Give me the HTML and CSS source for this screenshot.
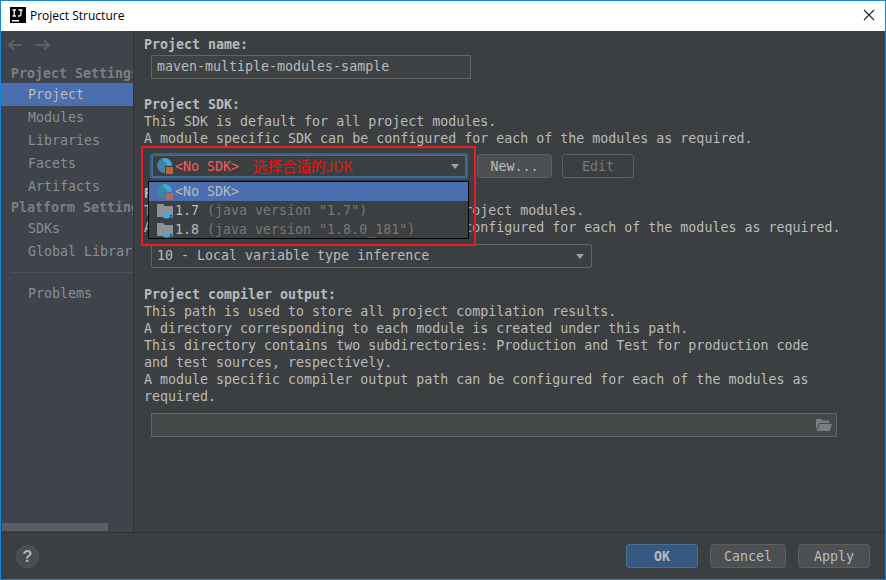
FILE: index.html
```html
<!DOCTYPE html>
<html lang="en">
<head>
<meta charset="utf-8">
<title>Project Structure</title>
<link rel="stylesheet" href="styles.css">
</head>
<body>
<svg class="defs" width="0" height="0" aria-hidden="true">
  <symbol id="sdk" viewBox="0 0 16 16">
    <circle cx="7.5" cy="7.5" r="7.5" fill="#3f83a6"/>
    <path d="M6 .2a7.500 7.500 0 0 1 9 7.300H10A4 4 0 0 0 6.500 4z" fill="#3fa9d8"/>
    <rect x="8" y="8" width="8" height="8" fill="#3c3f41"/>
    <rect x="9" y="9" width="7" height="7" fill="#b9623b"/>
  </symbol>
  <symbol id="sdk-active" viewBox="0 0 16 16">
    <circle cx="7.5" cy="7.5" r="7.5" fill="#3f83a6"/>
    <path d="M6 .2a7.500 7.500 0 0 1 9 7.300H10A4 4 0 0 0 6.500 4z" fill="#3fa9d8"/>
    <rect x="8" y="8" width="8" height="8" fill="#4b6eaf"/>
    <rect x="9" y="9" width="7" height="7" fill="#b4675a"/>
  </symbol>
  <symbol id="jdk" viewBox="0 0 16 16">
    <path d="M0 1h6l2 2h8v9H7v2H0z" fill="#8b9399"/>
    <path d="M6 11h7v2.500a2 2 0 0 1-2 2H8a2 2 0 0 1-2-2z" fill="#3fa9d8"/>
    <path d="M13 11.500h2.500V14H13" fill="none" stroke="#3fa9d8"/>
  </symbol>
</svg>
<div class="window">
  <header class="titlebar">
    <svg class="app-icon" width="16" height="16" viewBox="0 0 16 16" aria-hidden="true">
      <rect width="16" height="16" fill="#000"/>
      <rect x="2" y="13" width="7" height="1.500" fill="#fff"/>
      <path d="M2.500 3h3.500M4.200 3v6M2.500 9h3.500M8.500 3h4M11 3v4.500a1.500 1.500 0 0 1-1.500 1.500H8" stroke="#fff" stroke-width="1.300" fill="none"/>
    </svg>
    <span class="title">Project Structure</span>
    <svg class="close" width="12" height="12" viewBox="0 0 12 12" aria-hidden="true">
      <path d="M1 1l10 10M11 1L1 11" stroke="#222" stroke-width="1.100" fill="none"/>
    </svg>
  </header>
  <div class="body">
    <nav class="sidebar">
      <div class="arrows">
        <svg width="44" height="12" viewBox="0 0 44 12" aria-hidden="true">
          <path d="M15 6H2M7 1.500L2 6l5 4.500M29 6h13M37 1.500L42 6l-5 4.500" stroke="#5c6066" stroke-width="2" fill="none"/>
        </svg>
      </div>
      <div class="nav-head">Project Settings</div>
      <div class="nav-item selected">Project</div>
      <div class="nav-item">Modules</div>
      <div class="nav-item">Libraries</div>
      <div class="nav-item">Facets</div>
      <div class="nav-item">Artifacts</div>
      <div class="nav-head platform">Platform Settings</div>
      <div class="nav-item">SDKs</div>
      <div class="nav-item">Global Libraries</div>
      <div class="nav-sep"></div>
      <div class="nav-item">Problems</div>
      <div class="scrollbar"></div>
    </nav>
    <main class="content">
      <div class="label">Project name:</div>
      <div class="field name-field">maven-multiple-modules-sample</div>

      <div class="label sdk-label">Project SDK:</div>
      <p class="line">This SDK is default for all project modules.</p>
      <p class="line">A module specific SDK can be configured for each of the modules as required.</p>
      <div class="sdk-row">
        <div class="combo sdk-combo">
          <svg class="icon" width="16" height="16"><use href="#sdk"/></svg>
          <span class="no-sdk">&lt;No SDK&gt;</span>
          <span class="caret"></span>
        </div>
        <button class="btn new-btn">New...</button>
        <button class="btn edit-btn" disabled>Edit</button>
      </div>

      <div class="label level-label">Project language level:</div>
      <p class="line">This language level is default for all project modules.</p>
      <p class="line">A module specific language level can be configured for each of the modules as required.</p>
      <div class="combo level-combo">
        <span>10 - Local variable type inference</span>
        <span class="caret"></span>
      </div>

      <div class="label output-label">Project compiler output:</div>
      <p class="line">This path is used to store all project compilation results.</p>
      <p class="line">A directory corresponding to each module is created under this path.</p>
      <p class="line">This directory contains two subdirectories: Production and Test for production code</p>
      <p class="line">and test sources, respectively.</p>
      <p class="line">A module specific compiler output path can be configured for each of the modules as</p>
      <p class="line">required.</p>
      <div class="field output-field">
        <svg class="folder" width="16" height="14" viewBox="0 0 16 14" aria-hidden="true">
          <path d="M0 1h5l1.500 1.500H13V5H3.500L0 12z" fill="#7a7e80"/>
          <path d="M3.800 6H16l-2.500 7H.8z" fill="#7a7e80"/>
        </svg>
      </div>

      <div class="popup">
        <div class="popup-row active">
          <svg class="icon" width="16" height="16"><use href="#sdk-active"/></svg>
          <span>&lt;No SDK&gt;</span>
        </div>
        <div class="popup-row">
          <svg class="icon" width="16" height="16"><use href="#jdk"/></svg>
          <span>1.7 <span class="muted">(java version "1.7")</span></span>
        </div>
        <div class="popup-row">
          <svg class="icon" width="16" height="16"><use href="#jdk"/></svg>
          <span>1.8 <span class="muted">(java version "1.8.0_181")</span></span>
        </div>
      </div>
      <div class="red-box"></div>
      <div class="note">选择合适的JDK</div>
    </main>
  </div>
  <footer class="footer">
    <button class="help">?</button>
    <div class="actions">
      <button class="btn ok-btn">OK</button>
      <button class="btn cancel-btn">Cancel</button>
      <button class="btn apply-btn">Apply</button>
    </div>
  </footer>
</div>
</body>
</html>
```

FILE: styles.css
```css
* { box-sizing: border-box; }
html, body { margin: 0; height: 100%; }
body {
  width: 886px;
  height: 580px;
  overflow: hidden;
  font-family: "DejaVu Sans Mono", "Liberation Mono", monospace;
  font-size: 13.3px;
  line-height: 17px;
  color: #bbbbbb;
}
.defs { position: absolute; }
.window {
  display: flex;
  flex-direction: column;
  width: 886px;
  height: 580px;
  border: 1px solid #1883d7;
  background: #3c3f41;
}
.titlebar {
  display: flex;
  align-items: center;
  flex: none;
  height: 30px;
  padding: 0 9px 2px 9px;
  background: #fff;
}
.app-icon { flex: none; }
.title {
  margin-left: 4px;
  font-family: "Open Sans", "Noto Sans", sans-serif;
  font-size: 12px;
  color: #000;
}
.close { margin-left: auto; margin-right: 1px; }
.body { display: flex; flex: 1; min-height: 0; }
.sidebar {
  position: relative;
  flex: none;
  width: 133px;
  padding-top: 8px;
  overflow: hidden;
  white-space: nowrap;
  background: #3e434c;
  border-right: 1px solid #323232;
  color: #8b8e92;
}
.arrows { height: 12px; margin-left: 6px; display: flex; }
.nav-head { height: 20px; margin-top: 12px; padding-left: 10px; font-weight: 700; color: #7d7f82; line-height: 22px; }
.nav-head.platform { height: 19px; margin-top: 0; line-height: 19px; }
.nav-item { height: 23px; padding-left: 27px; line-height: 23px; }
.nav-item.selected { background: #4b6eaf; color: #bbbbbb; }
.nav-sep { height: 1px; margin: 9px 0 9px 10px; background: #4f5156; }
.scrollbar { position: absolute; left: 1px; bottom: 1px; width: 106px; height: 8px; background: #5a5d66; }
.content { position: relative; flex: 1; min-width: 0; padding: 5px 0 0 10px; white-space: nowrap; }
.label { font-weight: 700; height: 17px; }
.line { margin: 0; height: 17px; }
.sdk-label { margin-top: 17px; }
.level-label { margin-top: 6px; }
.output-label { margin-top: 18px; }
.field {
  display: flex;
  align-items: center;
  height: 24px;
  margin-left: 7px;
  padding-left: 5px;
  border: 1px solid #646464;
  background: #45494a;
}
.name-field { width: 320px; margin-top: 2px; padding-bottom: 1px; background: #3f4244; }
.output-field { width: 686px; margin-top: 8px; justify-content: flex-end; padding: 0 4px 0 0; }
.sdk-row { display: flex; align-items: center; margin: 6px 0 0 6px; }
.combo {
  display: flex;
  align-items: center;
  position: relative;
  background: #3c3f41;
}
.sdk-combo {
  width: 318px;
  height: 26px;
  padding-left: 5px;
  border: 2px solid #3d6185;
  border-radius: 3px;
  box-shadow: inset 0 0 0 1px #466d94;
}
.level-combo {
  width: 441px;
  height: 24px;
  margin: 8px 0 0 7px;
  padding: 0 0 2px 5px;
  border: 1px solid #646464;
  border-radius: 2px;
}
.icon { flex: none; }
.no-sdk { margin-left: 2px; color: #ff5a5a; }
.caret {
  position: absolute;
  right: 7px;
  top: 50%;
  margin-top: -2px;
  border-left: 4px solid transparent;
  border-right: 4px solid transparent;
  border-top: 5px solid #a0a0a0;
}
.btn {
  height: 24px;
  padding: 1px 0 0;
  font: inherit;
  line-height: 22px;
  color: #bbbbbb;
  background: #4c5052;
  border: 1px solid #5e6060;
  border-radius: 3px;
}
.new-btn { width: 75px; margin-left: 9px; }
.edit-btn { width: 72px; margin-left: 10px; background: transparent; color: #777777; border-color: #5e6060; }
.footer {
  display: flex;
  align-items: center;
  justify-content: space-between;
  flex: none;
  height: 47px;
  padding: 0 15px 0 15px;
  border-top: 1px solid #323232;
}
.help {
  width: 23px;
  height: 23px;
  padding: 0;
  border: 1px solid #55585a;
  border-radius: 50%;
  background: #4a4d4f;
  color: #b5b5b5;
  font: 700 16px/21px "Liberation Sans", sans-serif;
}
.actions { display: flex; gap: 12px; }
.ok-btn { width: 72px; background: #365880; border-color: #4c708c; color: #bbbbbb; font-weight: 700; }
.cancel-btn { width: 76px; }
.apply-btn { width: 72px; }
.popup {
  position: absolute;
  left: 14px;
  top: 150px;
  width: 321px;
  height: 58px;
  padding: 0;
  background: #3c3f41;
  border: 1px solid #000;
}
.popup-row { display: flex; align-items: center; height: 19px; padding-left: 8px; gap: 2px; }
.popup-row.active { background: #4b6eaf; }
.muted { color: #777777; }
.red-box {
  position: absolute;
  left: 7px;
  top: 115px;
  width: 335px;
  height: 100px;
  border: 2px solid #ed1c24;
}
.note {
  position: absolute;
  left: 119px;
  top: 126px;
  font-family: "Noto Sans CJK SC", "Liberation Sans", sans-serif;
  font-size: 14.5px;
  line-height: 18px;
  color: #f01010;
}
```
